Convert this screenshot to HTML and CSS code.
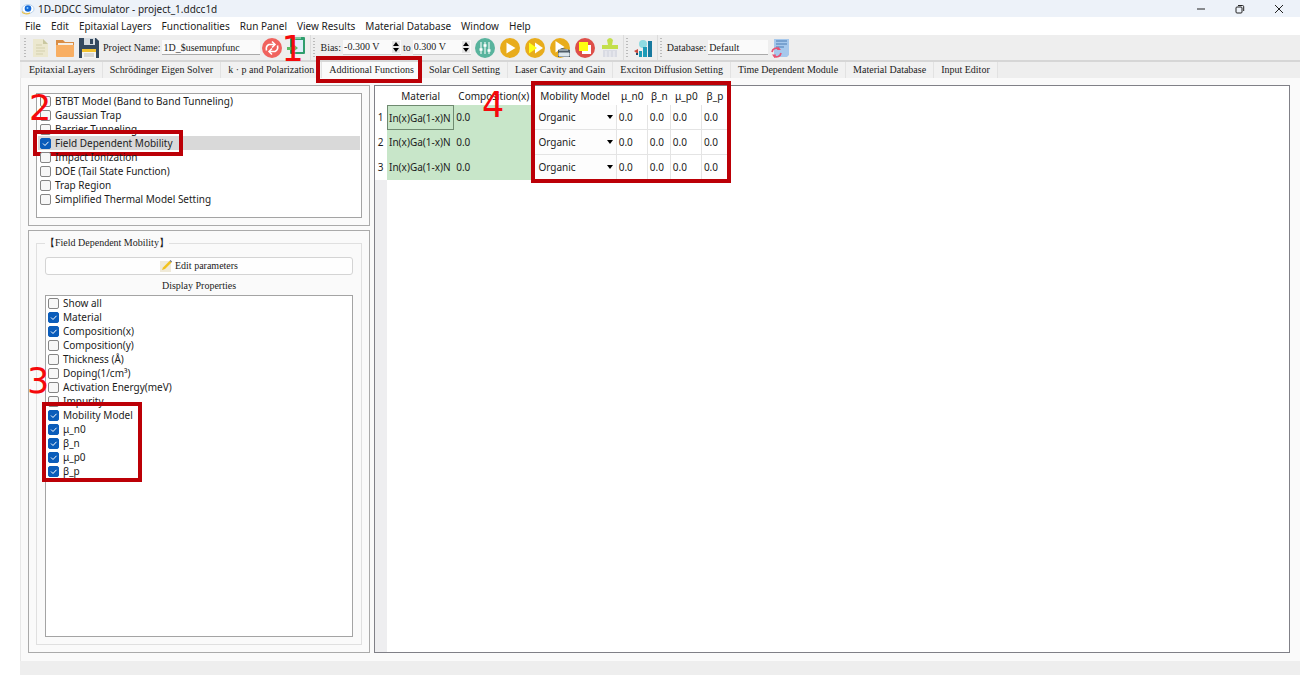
FILE: index.html
```html
<!DOCTYPE html>
<html lang="en">
<head>
<meta charset="utf-8">
<title>1D-DDCC Simulator - project_1.ddcc1d</title>
<link rel="stylesheet" href="styles.css">
</head>
<body>
<div class="app">
  <header class="titlebar">
    <svg class="logo" viewBox="0 0 14 12"><ellipse cx="7" cy="6" rx="6" ry="4.500" fill="#fff" stroke="#b9d4ee"/><path d="M1 8.500C2 11 6 11.500 9 10" fill="none" stroke="#e9c14b" stroke-width="1.200"/><circle cx="7" cy="5.500" r="3.300" fill="#1268d8"/><circle cx="6.500" cy="5" r="1" fill="#8cf"/></svg>
    <h1 class="title">1D-DDCC Simulator - project_1.ddcc1d</h1>
    <div class="window-buttons">
      <button aria-label="Minimize"><svg viewBox="0 0 10 10"><path d="M1 5H9"/></svg></button>
      <button aria-label="Restore"><svg viewBox="0 0 10 10"><rect x="1" y="3" width="6" height="6" rx="1"/><path d="M3 1.500H7.500Q8.700 1.500 8.700 2.700V7"/></svg></button>
      <button aria-label="Close"><svg viewBox="0 0 10 10"><path d="M1 1L9 9M9 1L1 9"/></svg></button>
    </div>
  </header>

  <nav class="menubar">
    <button>File</button><button>Edit</button><button>Epitaxial Layers</button><button>Functionalities</button><button>Run Panel</button><button>View Results</button><button>Material Database</button><button>Window</button><button>Help</button>
  </nav>

  <div class="toolbar">
    <div class="group">
      <i class="grip"></i>
      <button class="tool" aria-label="New"><svg viewBox="0 0 20 20"><path d="M2 1H12L17 6V19H2Z" fill="#ece8cf"/><path d="M12 1L17 6H12Z" fill="#c9c7a0"/><path d="M5 7H11M5 10H14M5 13H14M5 16H12" stroke="#d3cfae" stroke-width="1.200"/></svg></button>
      <button class="tool" aria-label="Open"><svg viewBox="0 0 20 20"><path d="M1 2H8L10 4H19V18H1Z" fill="#d98d45"/><path d="M3 5H18V9H3Z" fill="#f5eee4"/><path d="M1 7H19V18Q19 19 18 19H2Q1 19 1 18Z" fill="#f8ae62"/></svg></button>
      <button class="tool" aria-label="Save"><svg viewBox="0 0 20 20"><path d="M0 0H17L20 3V20H0Z" fill="#34495e"/><path d="M5 0H16V7H5Z" fill="#d5dbe0"/><path d="M11 1H14V6H11Z" fill="#34495e"/><path d="M3 11H17V20H3Z" fill="#f4f4f0"/><path d="M3 11H17V14H3Z" fill="#f2c230"/><path d="M5 16H15M5 18H15" stroke="#bbb"/></svg></button>
      <label for="project">Project Name:</label>
      <input id="project" class="field project" value="1D_$usemunpfunc">
      <button class="tool" aria-label="Reload"><svg viewBox="0 0 20 20"><circle cx="10" cy="10" r="10" fill="#f0625d"/><path d="M4.500 12.500Q3.500 8 7 6.500H12M15.500 7.500Q16.500 12 13 13.500H8" fill="none" stroke="#fff" stroke-width="1.600"/><path d="M10 3.500L13 6.500L10 9.500M10 10.500L7 13.500L10 16.500" fill="none" stroke="#fff" stroke-width="1.600"/></svg></button>
      <span class="callout-anchor">
        <button class="tool" aria-label="Import"><svg viewBox="0 0 20 20"><rect x="4" y="1" width="15" height="17" rx="1" fill="#2f9e6e"/><rect x="6" y="4" width="11" height="12" fill="#dfeefa"/><rect x="9" y="1" width="6" height="2" fill="#7cc9a0"/><path d="M1 11H6V7L12 12L6 17V14H1Z" fill="#58bb65"/></svg></button>
        <b class="number number-one">1</b>
      </span>
    </div>
    <div class="group">
      <i class="grip"></i>
      <label for="from">Bias:</label>
      <span class="spin"><input id="from" value="-0.300 V"><svg viewBox="0 0 8 12"><path d="M4 1L7 5H1ZM4 11L7 7H1Z"/></svg></span>
      <label for="to">to</label>
      <span class="spin"><input id="to" value="0.300 V"><svg viewBox="0 0 8 12"><path d="M4 1L7 5H1ZM4 11L7 7H1Z"/></svg></span>
      <button class="tool run" aria-label="Parameters"><svg viewBox="0 0 20 20"><circle cx="10" cy="10" r="10" fill="#58b39d"/><path d="M6 4V16M10 4V16M14 4V16" stroke="#e9f7f2" stroke-width="1.200"/><path d="M4.500 11.500H7.500M8.500 7.500H11.500M12.500 12.500H15.500" stroke="#fff" stroke-width="2.400"/></svg></button>
      <button class="tool run" aria-label="Run"><svg viewBox="0 0 20 20"><circle cx="10" cy="10" r="10" fill="#e8ac1c"/><path d="M6.500 4.500L15.500 10L6.500 15.500Z" fill="#fff"/></svg></button>
      <button class="tool run" aria-label="Run all"><svg viewBox="0 0 20 20"><circle cx="10" cy="10" r="10" fill="#e8ac1c"/><path d="M10 4.500L18 10L10 15.500Z" fill="#fff"/><path d="M4 4.500L12 10L4 15.500Z" fill="#ffff18"/></svg></button>
      <button class="tool run" aria-label="Run from file"><svg viewBox="0 0 20 20"><circle cx="10" cy="10" r="10" fill="#e8ac1c"/><path d="M5.500 3L14.500 9L5.500 14.500Z" fill="#fff"/><path d="M8 12L12 10L20 12V19H8Z" fill="#4d5b66"/><path d="M9 12H18M9 15H19V18H9Z" fill="#dce6ec" stroke="#dce6ec"/></svg></button>
      <button class="tool run" aria-label="Stop"><svg viewBox="0 0 20 20"><circle cx="10" cy="10" r="10" fill="#de4f49"/><rect x="7" y="7" width="9" height="9" fill="#fff"/><rect x="4" y="4" width="9" height="9" fill="#ffff10"/></svg></button>
      <button class="tool run" aria-label="Clean"><svg viewBox="0 0 20 20"><path d="M7 2Q10 -2 13 2L12 7H18V11H2V7H8Z" fill="#c3df4c"/><path d="M3 12H17V19H3Z" fill="#d9dbe3"/><path d="M6 13V19M10 13V19M14 13V19" stroke="#f0f0f4"/></svg></button>
    </div>
    <div class="group">
      <i class="grip"></i>
      <button class="tool" aria-label="Plot"><svg viewBox="0 0 20 20"><circle cx="10" cy="6" r="4" fill="#8edbe2"/><path d="M6 13H9V19H6ZM10 9H14V19H10Z" fill="#1d9bb8"/><path d="M15 3H19V19H15Z" fill="#17799f"/><path d="M1 13L5 11V16Z" fill="#c7483c"/><path d="M3 15H5V17H3Z" fill="#234b6b"/></svg></button>
    </div>
    <div class="group last">
      <i class="grip"></i>
      <label for="database">Database:</label>
      <input id="database" class="field database" value="Default">
      <button class="tool" aria-label="Update database"><svg viewBox="0 0 20 20"><path d="M4 1H19V17L17 19H4Z" fill="#a6c8ec"/><path d="M6 3H17M6 6H17M6 9H14" stroke="#4a7db4" stroke-width="1.200"/><path d="M2 14A4.500 4.500 0 0 1 9 11M11 15A4.500 4.500 0 0 1 4 18" fill="none" stroke="#e65374" stroke-width="1.700"/><path d="M8 8.500L11 12H7ZM5 20.500L2 16.500H6Z" fill="#e65374"/></svg></button>
    </div>
  </div>

  <div class="tabs" role="tablist">
    <button role="tab">Epitaxial Layers</button><button role="tab">Schrödinger Eigen Solver</button><button role="tab">k · p and Polarization</button><button role="tab" class="active" aria-selected="true">Additional Functions<i class="outline"></i></button><button role="tab">Solar Cell Setting</button><button role="tab">Laser Cavity and Gain</button><button role="tab">Exciton Diffusion Setting</button><button role="tab">Time Dependent Module</button><button role="tab">Material Database</button><button role="tab">Input Editor</button>
  </div>

  <main class="pane">
    <aside class="side">
      <section class="frame">
        <div class="list models">
          <label><input type="checkbox">BTBT Model (Band to Band Tunneling)</label>
          <label><input type="checkbox">Gaussian Trap</label>
          <label><input type="checkbox">Barrier Tunneling</label>
          <label class="selected"><input type="checkbox" checked>Field Dependent Mobility<i class="outline"></i></label>
          <label><input type="checkbox">Impact Ionization</label>
          <label><input type="checkbox">DOE (Tail State Function)</label>
          <label><input type="checkbox">Trap Region</label>
          <label><input type="checkbox">Simplified Thermal Model Setting</label>
          <b class="number number-two">2</b>
        </div>
      </section>
      <section class="frame grow">
        <fieldset class="groupbox">
          <legend>【Field Dependent Mobility】</legend>
          <button class="edit"><svg viewBox="0 0 12 12"><rect y="1" width="11" height="11" fill="#f0ead8"/><path d="M2 10L3 7.500L9.500 1L11.500 2.500L5 9Z" fill="#f2c21c"/><path d="M9.500 1L10.500 0L12 1.500L11.500 2.500Z" fill="#777"/></svg>Edit parameters</button>
          <h2 class="caption">Display Properties</h2>
          <div class="list properties">
            <label><input type="checkbox">Show all</label>
            <label><input type="checkbox" checked>Material</label>
            <label><input type="checkbox" checked>Composition(x)</label>
            <label><input type="checkbox">Composition(y)</label>
            <label><input type="checkbox">Thickness (Å)</label>
            <label><input type="checkbox">Doping(1/cm³)</label>
            <label><input type="checkbox">Activation Energy(meV)</label>
            <label><input type="checkbox">Impurity</label>
            <div class="marked">
              <label><input type="checkbox" checked>Mobility Model</label>
              <label><input type="checkbox" checked>μ_n0</label>
              <label><input type="checkbox" checked>β_n</label>
              <label><input type="checkbox" checked>μ_p0</label>
              <label><input type="checkbox" checked>β_p</label>
              <i class="outline"></i>
              <b class="number number-three">3</b>
            </div>
          </div>
        </fieldset>
      </section>
    </aside>

    <section class="sheet">
      <div class="rail"></div>
      <div class="grid-wrap">
        <table class="grid">
          <colgroup><col class="c-index"><col class="c-material"><col class="c-comp"><col class="c-model"><col class="c-wide"><col class="c-slim"><col class="c-wide"><col class="c-last"></colgroup>
          <thead><tr><th></th><th>Material</th><th>Composition(x)</th><th>Mobility Model</th><th>μ_n0</th><th>β_n</th><th>μ_p0</th><th>β_p</th></tr></thead>
          <tbody>
            <tr><th>1</th><td class="green current">In(x)Ga(1-x)N</td><td class="green">0.0</td><td class="model"><select aria-label="Mobility model 1"><option>Organic</option></select></td><td>0.0</td><td>0.0</td><td>0.0</td><td>0.0</td></tr>
            <tr><th>2</th><td class="green">In(x)Ga(1-x)N</td><td class="green">0.0</td><td class="model"><select aria-label="Mobility model 2"><option>Organic</option></select></td><td>0.0</td><td>0.0</td><td>0.0</td><td>0.0</td></tr>
            <tr><th>3</th><td class="green">In(x)Ga(1-x)N</td><td class="green">0.0</td><td class="model"><select aria-label="Mobility model 3"><option>Organic</option></select></td><td>0.0</td><td>0.0</td><td>0.0</td><td>0.0</td></tr>
          </tbody>
        </table>
        <i class="outline"></i>
        <b class="number number-four">4</b>
      </div>
    </section>
  </main>
  <footer class="statusbar"></footer>
</div>
</body>
</html>
```
FILE: styles.css
```css
* { box-sizing: border-box; }
body { margin: 0; background: #fff; color: #1c1c1c; font: 10px/14px "Noto Sans", "Open Sans", sans-serif; }
button, input, select { margin: 0; padding: 0; border: 0; background: none; color: inherit; font: inherit; }
svg { display: block; }

.app { display: flex; flex-direction: column; height: 100vh; margin-left: 20px; }

.titlebar { display: flex; flex: none; align-items: center; height: 17px; padding-left: 1px; background: #edf2f9; }
.logo { width: 14px; height: 12px; }
.title { flex: 1; margin: 0 0 0 3px; font-size: 10px; font-weight: 400; }
.window-buttons { display: flex; padding-right: 2px; }
.window-buttons button { display: grid; width: 39px; place-items: center; }
.window-buttons svg { width: 10px; height: 10px; fill: none; stroke: #222; }

.menubar { display: flex; flex: none; align-items: center; gap: 10px; height: 18px; padding-left: 5px; }
.menubar button { white-space: nowrap; }

.toolbar, .tabs, .groupbox { font-family: "Liberation Serif", serif; font-size: 10px; }
.toolbar { display: flex; flex: none; height: 27px; padding-left: 2px; border-bottom: 2px solid #d6d6d6; background: #eee; }
.group { display: flex; align-items: center; gap: 2px; padding: 0 2px; border-right: 1px solid #dcdcdc; }
.group.last { border-right: 0; }
.grip { width: 2px; height: 20px; margin-right: 3px; background: repeating-linear-gradient(#bbb 0 1px, transparent 1px 3px); }
.tool, .tool svg { width: 20px; height: 20px; }
.tool { margin-right: 2px; }
.tool.run { margin: 0 1px 0 2px; }
.field { height: 15px; padding: 0 1px; border-bottom: 1px solid #aaa; background: #fafafa; }
.project { width: 98px; }
.database { width: 60px; }
.spin { display: flex; align-items: center; width: 58px; height: 15px; padding-right: 1px; border-bottom: 1px solid #ccc; background: #fafafa; }
.spin input { flex: 1; min-width: 0; padding-left: 1px; }
.spin svg { width: 8px; height: 12px; background: #e6e6e6; }

.tabs { display: flex; flex: none; height: 16px; padding-left: 2px; background: #eee; }
.tabs button { position: relative; padding: 0 7px; border-right: 1px solid #e2e2e2; background: #f1f1f1; line-height: 16px; white-space: nowrap; }
.tabs .active { z-index: 1; padding: 0 7px; background: #fafafa; }

.callout-anchor { position: relative; }
.outline { position: absolute; border: 4px solid #bc0007; pointer-events: none; }
.tabs .outline { inset: -6px -1px -5px -6px; }
.number { position: absolute; z-index: 2; color: #f5090c; font: 400 35px/36px "DejaVu Sans", sans-serif; pointer-events: none; }
.number-one { top: -5px; left: -5px; }

.pane { display: grid; flex: 1; grid-template-columns: 342px minmax(0, 1fr); gap: 4px; min-height: 0; padding: 7px 10px 8px 7px; border-left: 1px solid #e8e8e8; background: #fafafa; }
.side { display: flex; flex-direction: column; gap: 4px; min-height: 0; }
.frame { padding: 7px; border: 1px solid #aaa; }
.frame.grow { display: flex; flex: 1; min-height: 0; padding-top: 5px; }

.list { position: relative; padding: 0 1px; border: 1px solid #a4a4a4; background: #fff; font: 10px/14px "Noto Sans", sans-serif; }
.list label { display: flex; position: relative; align-items: center; gap: 4px; height: 14px; padding-left: 2px; }
.models { height: 125px; }
.selected { background: #d9d9d9; }
.selected .outline { top: -6px; bottom: -6px; left: -5px; width: 150px; }
.list input { appearance: none; width: 11px; height: 11px; border: 1px solid #858585; border-radius: 2px; background: #f7f7f7; }
.list input:checked { border-color: #0a5cba; background: #0a5cba url("data:image/svg+xml,%3Csvg xmlns='http://www.w3.org/2000/svg' viewBox='0 0 9 9'%3E%3Cpath d='M2 4.500L4 6.500L7.500 2.800' fill='none' stroke='white'/%3E%3C/svg%3E"); }
.number-two { top: -4px; left: -8px; }

.groupbox { display: flex; flex: 1; flex-direction: column; min-width: 0; margin: 0; padding: 7px 8px; border: 1px solid #e0e0e0; }
.groupbox legend { padding: 0; }
.edit { display: flex; align-items: center; justify-content: center; gap: 3px; height: 18px; border: 1px solid #d4d4d4; border-radius: 3px; background: #fefefe; }
.edit svg { width: 12px; height: 12px; }
.caption { margin: 4px 0 2px; font-size: 10px; font-weight: 400; text-align: center; }
.properties { flex: 1; }
.properties label { padding-left: 1px; }
.marked { position: relative; }
.marked .outline { top: -6px; bottom: -4px; left: -5px; width: 100px; }
.number-three { top: -45px; left: -20px; }

.sheet { display: flex; border: 1px solid #808087; background: #fff; }
.rail { width: 12px; margin-top: 94px; background: #eeeef0; }
.grid-wrap { position: relative; align-self: flex-start; margin-left: -12px; }
.grid { width: 353px; border-collapse: separate; border-spacing: 0; table-layout: fixed; background: #fff; }
.c-index { width: 12px; } .c-material { width: 67px; } .c-comp { width: 79px; } .c-model { width: 83px; }
.c-wide { width: 31px; } .c-slim { width: 23px; } .c-last { width: 26px; }
.grid th, .grid td { overflow: hidden; padding: 0; font-weight: 400; text-align: center; white-space: nowrap; }
.grid thead th { height: 19px; }
.grid tbody th, .grid td { height: 25px; border-right: 1px solid #e4e4e4; border-bottom: 1px solid #e4e4e4; }
.grid td { padding-left: 2px; text-align: left; }
.grid tbody th { border-color: #fff; }
.grid .green { border-color: #c8e6c9; background: #c8e6c9; }
.grid .current { border: 1px solid #6f8a70; padding-left: 1px; }
.grid .model { padding: 0; }
.grid select { display: block; width: 100%; height: 24px; padding-left: 5px; appearance: none; background: #fdfdfd url("data:image/svg+xml,%3Csvg xmlns='http://www.w3.org/2000/svg' viewBox='0 0 6 4'%3E%3Cpath d='M0 0H6L3 4Z'/%3E%3C/svg%3E") right 3px center / 6px 4px no-repeat; }
.grid-wrap .outline { top: -5px; bottom: -3px; left: 156px; width: 200px; }
.number-four { top: 1px; left: 107px; }

.statusbar { flex: none; height: 14px; background: #eee; }
```
